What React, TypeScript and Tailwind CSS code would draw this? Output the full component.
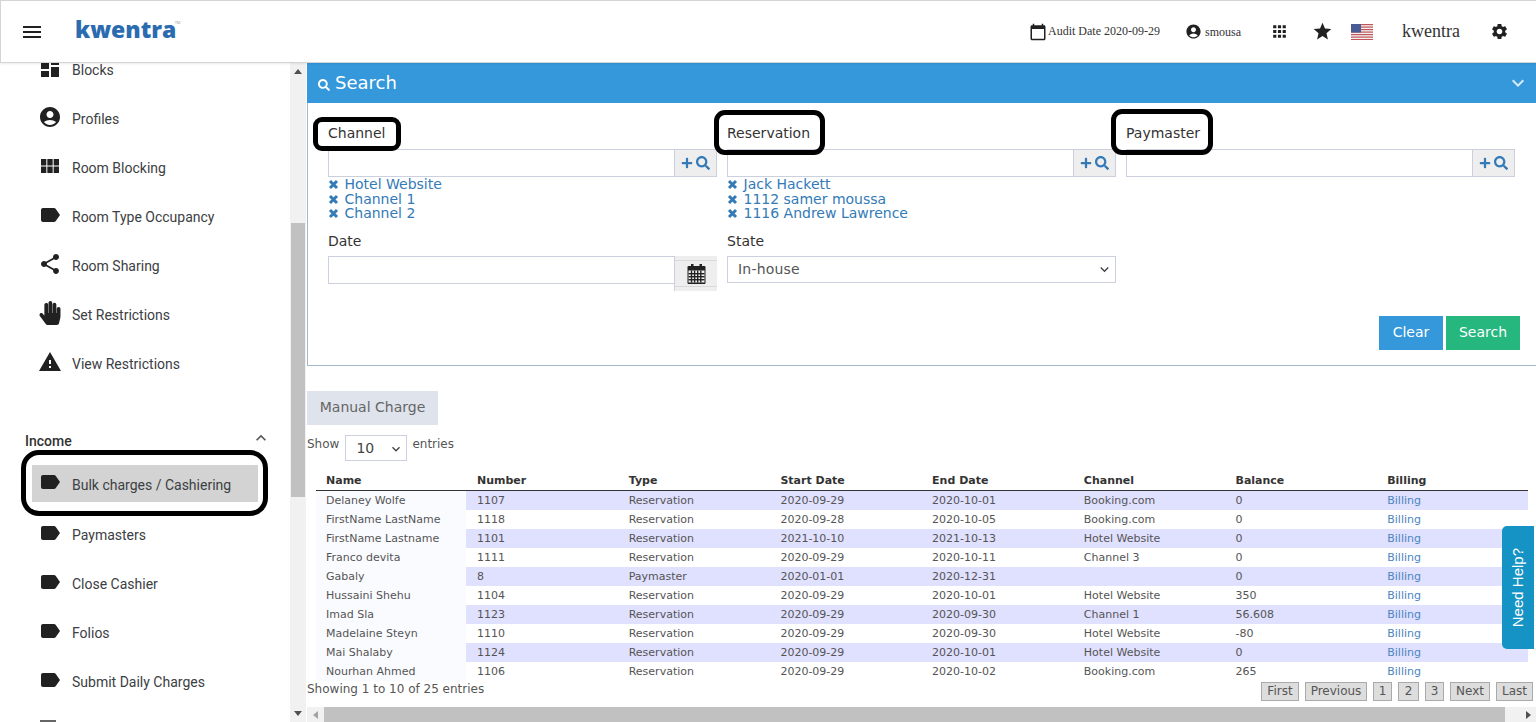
import React from "react";
import {
  MdDashboard, MdAccountCircle, MdViewModule, MdLabel, MdShare, MdWarning, MdMenu, MdExpandLess, MdExpandMore,
  MdCalendarToday, MdApps, MdStar, MdSettings,
} from "react-icons/md";
import { FaHandPaper, FaPlus, FaSearch } from "react-icons/fa";

const icons: any = { d: MdDashboard, a: MdAccountCircle, v: MdViewModule, l: MdLabel, s: MdShare, h: FaHandPaper, w: MdWarning };

function Row({ icon, label }: { icon: string; label: string }) {
  const I = icons[icon];
  return (
    <div className="h-[49px] flex items-center pl-[6px] shrink-0">
      <span className="w-[24px] h-[24px] flex items-center justify-center -mt-[5px] text-[#212121] shrink-0">
        <I className="text-[24px]" />
      </span>
      <span className="ml-[10px] text-[14px] text-[#3c4043]">{label}</span>
    </div>
  );
}

function Flag() {
  return (
    <svg width="22" height="16" viewBox="0 0 22 16" className="shrink-0">
      <rect width="22" height="16" fill="#f3f0f0" />
      {[0, 2.5, 5, 7.5, 10, 12.5, 15].map((y) => (
        <rect key={y} y={y} width="22" height="1.2" fill="#c0555b" />
      ))}
      <rect width="10" height="8.5" fill="#4a5a94" />
    </svg>
  );
}

function TagList({ items }: { items: string[] }) {
  return (
    <div className="text-[14px] leading-[14.7px] text-[#337ab7]">
      {items.map((t) => (
        <div key={t} className="flex items-center h-[14.7px]">
          <svg width="11" height="11" viewBox="0 0 11 11" className="mr-[5.5px] shrink-0">
            <path d="M2 2 L9 9 M9 2 L2 9" stroke="#337ab7" strokeWidth="3" />
          </svg>
          <span>{t}</span>
        </div>
      ))}
    </div>
  );
}

function SearchInput() {
  return (
    <div className="flex h-[28px]">
      <input className="flex-1 min-w-0 border border-[#ccd0de] border-r-0 bg-white h-full outline-none" />
      <span className="w-[43px] bg-[#eeeeee] border border-[#ccd0de] flex items-center justify-center gap-[3px] text-[#337ab7]">
        <FaPlus className="text-[12px]" />
        <FaSearch className="text-[14px]" />
      </span>
    </div>
  );
}

function CalendarIcon() {
  return (
    <svg width="19" height="20" viewBox="0 0 19 20" className="shrink-0">
      <rect x="0.5" y="2" width="18" height="18" rx="1" fill="#212121" />
      <rect x="4" y="0" width="2.5" height="4" fill="#212121" />
      <rect x="12.5" y="0" width="2.5" height="4" fill="#212121" />
      <rect x="1.5" y="6.5" width="16" height="12" fill="#f0f0f0" />
      {[3.8, 6.9, 10, 13.1].map((x) => (
        <rect key={x} x={x} y="6.5" width="1.4" height="12" fill="#212121" />
      ))}
      {[9, 12, 15].map((y) => (
        <rect key={y} x="1.5" y={y} width="16" height="1.4" fill="#212121" />
      ))}
    </svg>
  );
}

const rows = [
  ["Delaney Wolfe", "1107", "Reservation", "2020-09-29", "2020-10-01", "Booking.com", "0"],
  ["FirstName LastName", "1118", "Reservation", "2020-09-28", "2020-10-05", "Booking.com", "0"],
  ["FirstName Lastname", "1101", "Reservation", "2021-10-10", "2021-10-13", "Hotel Website", "0"],
  ["Franco devita", "1111", "Reservation", "2020-09-29", "2020-10-11", "Channel 3", "0"],
  ["Gabaly", "8", "Paymaster", "2020-01-01", "2020-12-31", "", "0"],
  ["Hussaini Shehu", "1104", "Reservation", "2020-09-29", "2020-10-01", "Hotel Website", "350"],
  ["Imad Sla", "1123", "Reservation", "2020-09-29", "2020-09-30", "Channel 1", "56.608"],
  ["Madelaine Steyn", "1110", "Reservation", "2020-09-29", "2020-09-30", "Hotel Website", "-80"],
  ["Mai Shalaby", "1124", "Reservation", "2020-09-29", "2020-10-01", "Hotel Website", "0"],
  ["Nourhan Ahmed", "1106", "Reservation", "2020-09-29", "2020-10-02", "Booking.com", "265"],
];
const heads = ["Name", "Number", "Type", "Start Date", "End Date", "Channel", "Balance", "Billing"];

export default function App() {
  return (
    <div className="relative h-[722px] w-[1536px] overflow-hidden bg-white flex flex-col font-['DejaVu_Sans',sans-serif] text-[#444]">
      <header className="relative z-10 h-[63px] shrink-0 flex items-center bg-white border border-[#d4d4d4] border-r-0 shadow-[0_1px_2px_rgba(0,0,0,0.08)] font-['Liberation_Serif',serif] text-[#333]">
        <MdMenu className="text-[24px] ml-[19px] text-[#212121] shrink-0" />
        <span className="ml-[31px] relative font-['Open_Sans',sans-serif] font-extrabold text-[23px] leading-none text-[#2b6cb0] -mt-[4px]">
          kwentra
          <span className="absolute -right-[4px] top-[3px] text-[4px] font-normal text-[#999]">TM</span>
        </span>
        <div className="ml-auto flex items-center">
          <MdCalendarToday className="text-[18px] text-[#212121] shrink-0" />
          <span className="ml-[1px] text-[12px] whitespace-nowrap -mt-[2px]">Audit Date 2020-09-29</span>
          <MdAccountCircle className="ml-[25px] text-[17px] text-[#212121]" />
          <span className="ml-[3px] text-[12px]">smousa</span>
          <MdApps className="ml-[29px] text-[19px] text-[#212121]" />
          <MdStar className="ml-[23px] text-[21px] text-[#212121]" />
          <span className="ml-[18px]"><Flag /></span>
          <span className="ml-[29px] text-[18px] text-[#333]">kwentra</span>
          <MdSettings className="ml-[30px] mr-[27px] text-[19px] text-[#212121]" />
        </div>
      </header>

      <div className="flex flex-1 min-h-0">
        <aside className="w-[290px] shrink-0 overflow-hidden pl-[32px] pr-[32px] font-['Roboto',sans-serif]">
          <div className="-mt-[17px] flex flex-col">
            <Row icon="d" label="Blocks" />
            <Row icon="a" label="Profiles" />
            <Row icon="v" label="Room Blocking" />
            <Row icon="l" label="Room Type Occupancy" />
            <Row icon="s" label="Room Sharing" />
            <Row icon="h" label="Set Restrictions" />
            <Row icon="w" label="View Restrictions" />
            <div className="mt-[40px] h-[24px] -ml-[7px] -mr-[13px] flex items-center justify-between text-[14px] font-medium text-[#333] shrink-0">
              <span>Income</span>
              <MdExpandLess className="text-[20px] text-[#555] -mt-[6px]" />
            </div>
            <div className="relative mt-[12px] mb-[9px] h-[37px] bg-[#d3d3d3] flex items-center pl-[6px] shrink-0">
              <span className="w-[24px] h-[24px] flex items-center justify-center -mt-[3px] text-[#212121]">
                <MdLabel className="text-[24px]" />
              </span>
              <span className="ml-[10px] text-[14px] text-[#3c4043] mt-[4px]">Bulk charges / Cashiering</span>
              <span className="absolute -left-[11px] -right-[10px] -top-[15px] -bottom-[14px] border-[5px] border-black rounded-[18px]" />
            </div>
            <Row icon="l" label="Paymasters" />
            <Row icon="l" label="Close Cashier" />
            <Row icon="l" label="Folios" />
            <Row icon="l" label="Submit Daily Charges" />
            <div className="h-[30px] pl-[8px] pt-[13px] shrink-0">
              <div className="w-[16px] h-[3px] bg-[#666]" />
            </div>
          </div>
        </aside>

        <div className="w-[16px] shrink-0 bg-[#f1f1f1] flex flex-col items-center relative">
          <span className="mt-[6px] w-0 h-0 border-x-[4px] border-x-transparent border-b-[5px] border-b-[#505050]" />
          <div className="mt-[149px] h-[274px] w-[14px] bg-[#c1c1c1]" />
          <span className="mt-auto mb-[6px] w-0 h-0 border-x-[4px] border-x-transparent border-t-[5px] border-t-[#505050]" />
        </div>

        <main className="flex-1 min-w-0 ml-[1px] flex flex-col overflow-hidden">
          <section className="h-[303px] shrink-0 flex flex-col border border-[#a8b8c4] border-t-0 border-r-0">
            <div className="h-[40px] bg-[#3498db] flex items-center pl-[11px] pr-[10px] text-white shrink-0 -ml-[1px]">
              <FaSearch className="text-[12px] mt-[3px]" />
              <span className="ml-[5px] text-[18px] -mt-[2px]">Search</span>
              <MdExpandMore className="ml-auto text-[24px] text-[#d8ecf8] -mr-[4px]" />
            </div>
            <div className="flex-1 pl-[20px] pr-[20px] relative">
              <div className="grid grid-cols-[389px_389px_389px] gap-x-[10px]">
                <div>
                  <div className="relative h-[46px] pt-[22px] text-[14px] leading-[17px] text-[#333]">
                    Channel
                    <span className="absolute -left-[15px] top-[14px] w-[88px] h-[34px] border-[5px] border-black rounded-[9px]" />
                  </div>
                  <SearchInput />
                  <TagList items={["Hotel Website", "Channel 1", "Channel 2"]} />
                </div>
                <div>
                  <div className="relative h-[46px] pt-[22px] text-[14px] leading-[17px] text-[#333]">
                    Reservation
                    <span className="absolute -left-[13px] top-[7px] w-[111px] h-[45px] border-[5px] border-black rounded-[11px]" />
                  </div>
                  <SearchInput />
                  <TagList items={["Jack Hackett", "1112 samer moussa", "1116 Andrew Lawrence"]} />
                </div>
                <div>
                  <div className="relative h-[46px] pt-[22px] text-[14px] leading-[17px] text-[#333]">
                    Paymaster
                    <span className="absolute -left-[15px] top-[6px] w-[102px] h-[46px] border-[5px] border-black rounded-[11px]" />
                  </div>
                  <SearchInput />
                </div>
              </div>
              <div className="grid grid-cols-[389px_389px_389px] gap-x-[10px] mt-[12px]">
                <div>
                  <div className="text-[14px] leading-[17px] text-[#333] h-[23px]">Date</div>
                  <div className="flex items-start">
                    <input className="flex-1 min-w-0 h-[28px] border border-[#ccd0de] border-r-0 bg-white outline-none" />
                    <span className="w-[43px] h-[35px] bg-[#eeeeee] flex items-center justify-center py-[4px] border-l border-[#ccd0de]">
                      <span className="w-full h-full border-y border-[#d9d9d9] flex items-center justify-center">
                        <CalendarIcon />
                      </span>
                    </span>
                  </div>
                </div>
                <div>
                  <div className="text-[14px] leading-[17px] text-[#333] h-[23px]">State</div>
                  <div className="relative h-[27px]">
                    <select className="appearance-none w-full h-full border border-[#ccd0de] bg-white pl-[10px] text-[14px] text-[#555] tracking-[0.2px] outline-none">
                      <option>In-house</option>
                    </select>
                    <MdExpandMore className="absolute right-[3px] top-[5px] text-[17px] text-[#444] pointer-events-none" />
                  </div>
                </div>
              </div>
              <div className="absolute right-[16px] top-[213px] flex gap-[3px] text-[14px] text-white font-medium">
                <button className="w-[64px] h-[34px] bg-[#3498db] pb-[2px]">Clear</button>
                <button className="w-[74px] h-[34px] bg-[#26b77f] pb-[2px]">Search</button>
              </div>
            </div>
          </section>

          <div className="mt-[25px] w-[131px] h-[34px] bg-[#dfe3ec] flex items-center justify-center pb-[2px] text-[14px] text-[#666] shrink-0">
            Manual Charge
          </div>

          <div className="mt-[10px] h-[26px] flex items-start text-[12px] text-[#555] shrink-0">
            <span className="leading-[17px] mt-[1px]">Show</span>
            <span className="relative ml-[6px] w-[62px] h-[26px] border border-[#ccd0de] flex items-center pl-[10px] text-[14px] text-[#444]">
              10
              <MdExpandMore className="absolute right-[2px] top-[5px] text-[16px]" />
            </span>
            <span className="ml-[5px] leading-[17px] mt-[1px]">entries</span>
          </div>

          <table className="mt-[10px] ml-[9px] w-[1212px] table-fixed border-collapse text-[11px] text-[#555] shrink-0">
            <thead>
              <tr className="h-[19px] border-b border-[#333]">
                {heads.map((h, j) => (
                  <th key={h} className={"text-left font-bold text-[#333] align-middle pt-[2px] " + (j === 0 ? "w-[150px] pl-[10px]" : "pl-[11px]")}>{h}</th>
                ))}
              </tr>
            </thead>
            <tbody>
              {rows.map((r, i) => (
                <tr key={r[0]} className="h-[19px]">
                  {r.map((c, j) => (
                    <td
                      key={j}
                      className={
                        "p-0 h-[19px] leading-[19px] whitespace-nowrap " +
                        (j === 0 ? "pl-[10px] bg-[#fafbff]" : i % 2 === 0 ? "pl-[11px] bg-[#e0e0ff]" : "pl-[11px] bg-white")
                      }
                    >
                      {c}
                    </td>
                  ))}
                  <td className={"p-0 pl-[11px] h-[19px] leading-[19px] text-[#4a86c0] " + (i % 2 === 0 ? "bg-[#e0e0ff]" : "bg-white")}>Billing</td>
                </tr>
              ))}
            </tbody>
          </table>

          <div className="flex-1 min-h-0 flex items-start justify-between text-[12px] text-[#555]">
            <span className="mt-[1px] leading-[14px]">Showing 1 to 10 of 25 entries</span>
            <div className="mt-[1px] flex gap-[6px] pr-[3px] text-[12px] text-[#555]">
              {[["First", 38], ["Previous", 62], ["1", 19], ["2", 21], ["3", 19], ["Next", 40], ["Last", 37]].map(([t, w]) => (
                <span
                  key={t as string}
                  style={{ width: w as number }}
                  className="h-[19px] bg-[#dddddd] border border-[#aaaaaa] flex items-center justify-center"
                >
                  {t}
                </span>
              ))}
            </div>
          </div>

          <div className="h-[15px] shrink-0 bg-[#f1f1f1] flex items-center">
            <span className="ml-[6px] w-0 h-0 border-y-[4px] border-y-transparent border-r-[5px] border-r-[#a3a3a3]" />
            <div className="ml-[6px] w-[1181px] h-full bg-[#c1c1c1]" />
            <span className="ml-auto mr-[5px] w-0 h-0 border-y-[4px] border-y-transparent border-l-[5px] border-l-[#505050]" />
          </div>
        </main>
      </div>

      <div className="absolute left-[1502px] top-[526px] w-[32px] h-[123px] bg-[#1493c4] rounded-l-[5px] flex items-center justify-center">
        <span className="[writing-mode:vertical-rl] rotate-180 font-['Liberation_Sans',sans-serif] text-[15px] text-white whitespace-nowrap">
          Need Help?
        </span>
      </div>
    </div>
  );
}
